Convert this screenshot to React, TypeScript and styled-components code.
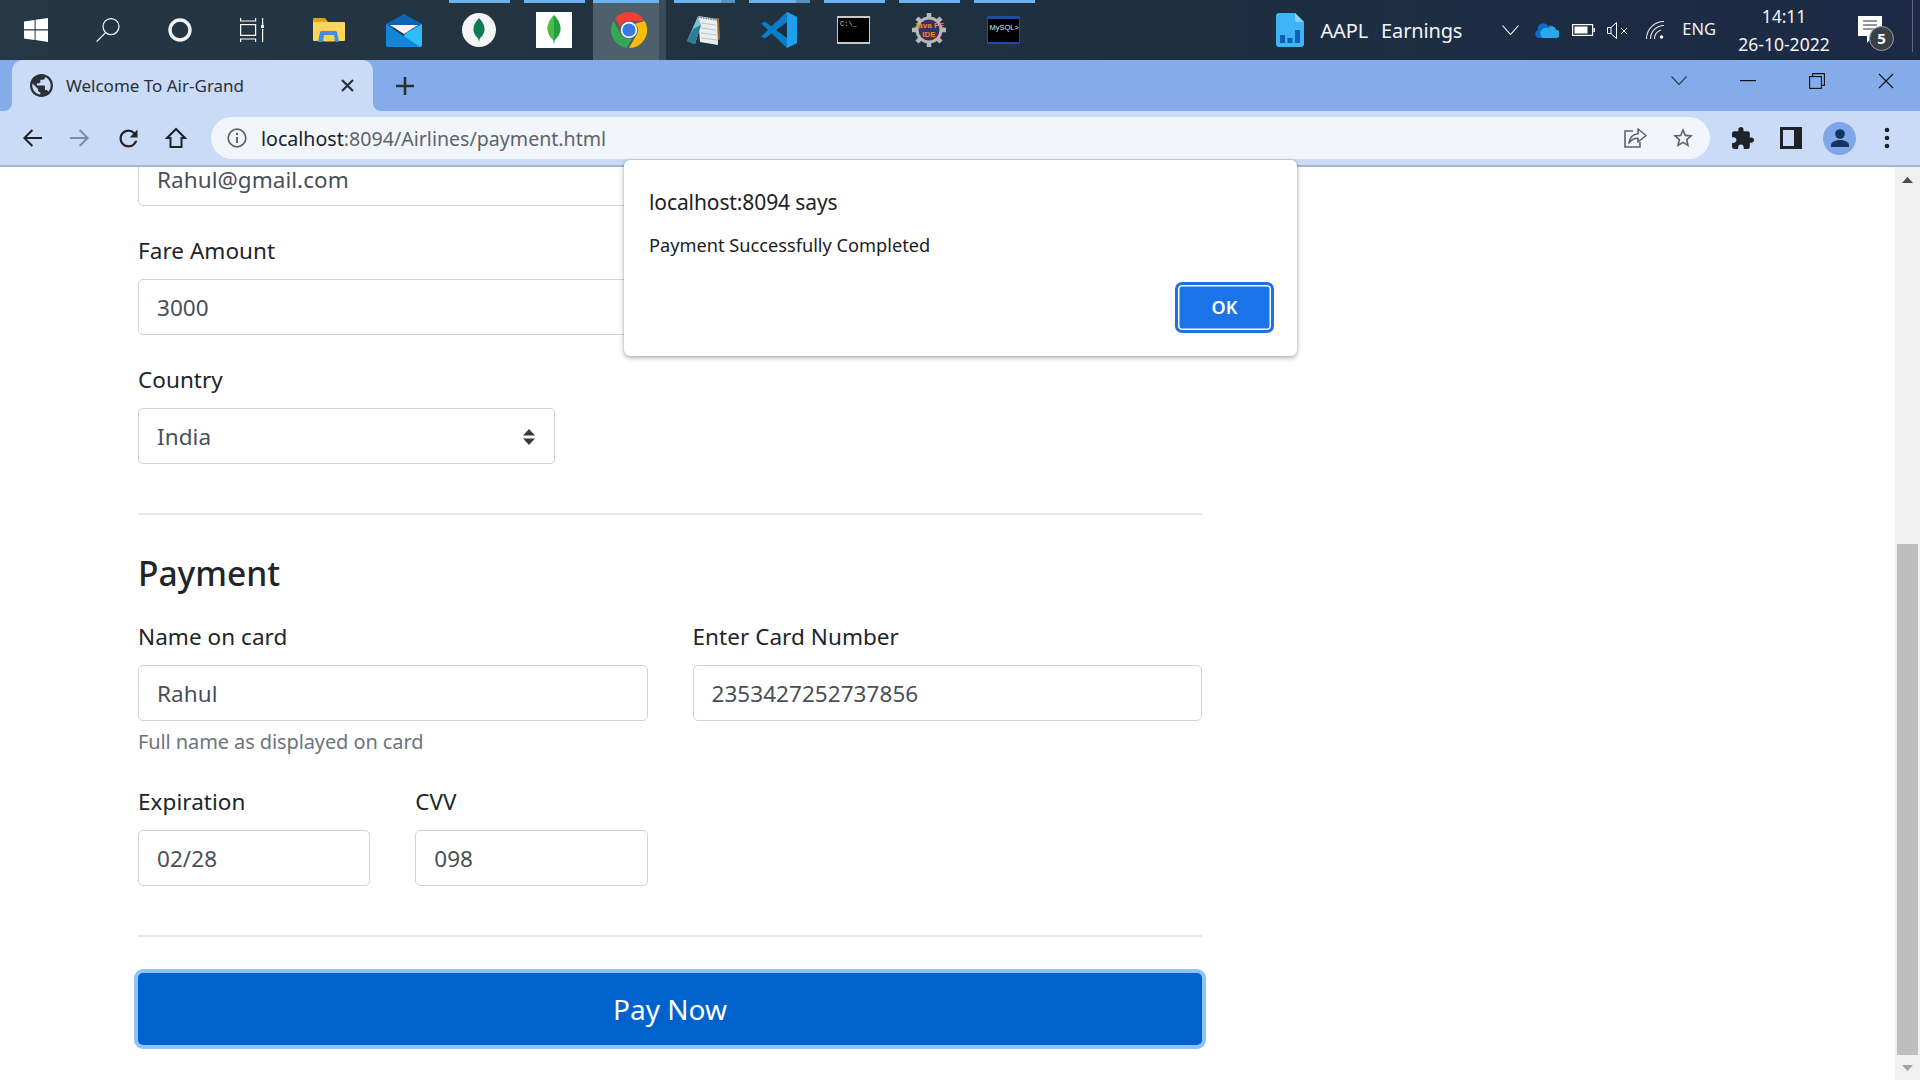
import React from "react";
import styled, { createGlobalStyle } from "styled-components";

const Global = createGlobalStyle`
  html, body { margin: 0; padding: 0; height: 1080px; overflow: hidden; background: #fff; }
  #root { height: 1080px; }
  * { box-sizing: border-box; }
`;

const UI = `"Noto Sans", "Open Sans", "Liberation Sans", sans-serif`;

const Page = styled.div`
  width: 1920px; height: 1080px; display: flex; flex-direction: column; overflow: hidden;
  position: relative; font-family: ${UI}; color: #212529;
`;

/* ---------- taskbar ---------- */
const Taskbar = styled.header`
  height: 60px; flex: none; display: flex; align-items: stretch;
  background: linear-gradient(90deg, #253744 0%, #1f3040 50%, #1c2a45 100%);
  color: #fff; position: relative;
`;
const SystemTile = styled.div`
  width: 72px; display: flex; align-items: center; justify-content: center;
`;
const AppGroup = styled.div`
  display: flex; margin-left: 3px;
`;
const AppTile = styled.div<{ $active?: boolean; $on?: boolean; $stack?: boolean }>`
  width: 75px; display: flex; align-items: center; justify-content: center; position: relative;
  &::before {
    content: ""; position: absolute; top: 0; left: ${(p) => (p.$active ? 2 : 8)}px; height: 3px;
    width: ${(p) => (p.$on ? (p.$active ? 66 : p.$stack ? 47 : 61) : 0)}px;
    background: #6fb1ec;
  }
  &::after {
    content: ""; position: absolute; top: 0; height: ${(p) => (p.$active ? 60 : 3)}px;
    left: ${(p) => (p.$active ? 2 : 55)}px;
    width: ${(p) => (p.$active ? 73 : p.$stack ? 14 : 0)}px;
    background: ${(p) =>
      p.$active ? "linear-gradient(90deg,#4f606d 0 66px,#3c4c59 66px 73px)" : "#5b90bb"};
    z-index: 0;
  }
  & > svg { position: relative; z-index: 1; }
  ${(p) => (p.$active ? `&::before { z-index: 1; }` : "")}
`;
const Tray = styled.div`
  margin-left: auto; display: flex; align-items: center; padding-right: 38px; position: relative;
  &::after {
    content: ""; position: absolute; right: 7px; top: 0; bottom: 8px; width: 1px; background: #5d6a80;
  }
`;
const TrayItem = styled.div<{ $gap: number }>`
  margin-left: ${(p) => p.$gap}px; display: flex; align-items: center; position: relative;
`;
const NewsText = styled.span`
  font-size: 20px; letter-spacing: -0.15px; word-spacing: 1.5px; white-space: pre; line-height: 1; margin-top: 2px;
  color: #f3f5f8;
`;
const LangText = styled.span`
  font-size: 16.5px; line-height: 1; color: #eef1f5; margin-top: -1px;
`;
const Clock = styled.div`
  width: 96px; display: flex; flex-direction: column; align-items: center; gap: 8px;
  font-size: 17.5px; line-height: 20px; color: #f3f5f8; margin-top: 0;
`;
const Badge = styled.span`
  position: absolute; left: 11px; top: 10px; width: 25px; height: 25px; border-radius: 50%;
  background: #3b3f47; border: 1px solid #9aa0a8; color: #fff; font-size: 15px; font-weight: 700;
  display: flex; align-items: center; justify-content: center; line-height: 1;
`;

/* ---------- tab strip ---------- */
const TabStrip = styled.div`
  height: 51px; flex: none; display: flex; background: #85acea; padding-left: 12px; align-items: stretch;
`;
const Tab = styled.div`
  width: 361px; background: #c9dbf7; border-radius: 11px 11px 0 0; display: flex; align-items: center;
  padding: 0 19px 0 18px; position: relative;
  &::before, &::after {
    content: ""; position: absolute; bottom: 0; width: 8px; height: 8px; background: #c9dbf7;
  }
  &::before { left: -8px; clip-path: path("M8 0 V8 H0 A8 8 0 0 0 8 0 Z"); }
  &::after { right: -8px; clip-path: path("M0 0 V8 H8 A8 8 0 0 1 0 0 Z"); }
`;
const TabTitle = styled.span`
  margin-left: 13px; font-size: 17px; line-height: 1; color: #2b2f36; flex: 1; white-space: nowrap; margin-top: -1px;
`;
const PlusButton = styled.div`
  margin-left: 22px; display: flex; align-items: center;
`;
const WindowControls = styled.div`
  margin-left: auto; display: flex; align-items: center; padding-right: 26px; margin-top: -10px;
`;
const WindowControl = styled.div<{ $gap: number }>`
  margin-left: ${(p) => p.$gap}px; display: flex;
`;

/* ---------- toolbar ---------- */
const Toolbar = styled.div`
  height: 56px; flex: none; display: flex; align-items: flex-start; background: #c9dbf7;
  border-bottom: 2px solid #a6b5d0; padding: 6px 0 0 8px;
`;
const NavButton = styled.div`
  width: 48px; height: 42px; display: flex; align-items: center; justify-content: center;
`;
const Omnibox = styled.div`
  width: 1499px; height: 42px; background: #f2f6fc; border-radius: 21px; display: flex; align-items: center;
  padding: 0 15px 0 16px; margin-left: 11px;
`;
const UrlText = styled.span`
  margin-left: 14px; font-size: 19.6px; line-height: 1; color: #5f6368; white-space: nowrap; flex: 1; margin-top: 1px;
`;
const UrlHost = styled.span`
  color: #202124;
`;
const OmniAction = styled.div<{ $gap: number }>`
  margin-left: ${(p) => p.$gap}px; display: flex;
`;
const ToolIcons = styled.div`
  display: flex; align-items: center; height: 42px;
`;
const ToolIcon = styled.div<{ $gap: number }>`
  margin-left: ${(p) => p.$gap}px; display: flex;
`;
const Avatar = styled.div`
  width: 33px; height: 33px; border-radius: 50%; background: #7ea6e8; display: flex;
  align-items: center; justify-content: center; margin-left: 21px;
`;

/* ---------- content ---------- */
const Viewport = styled.main`
  flex: 1; min-height: 0; display: flex; overflow: hidden;
`;
const PageArea = styled.div`
  flex: 1; min-width: 0; padding-left: 138px; overflow: hidden;
`;
const Form = styled.div`
  width: 1064px; margin-top: -17px;
`;
const Grid = styled.div`
  display: grid; grid-template-columns: repeat(4, 1fr); column-gap: 45px;
`;
const Field = styled.div<{ $span?: number }>`
  grid-column: span ${(p) => p.$span ?? 4};
`;
const FieldLabel = styled.div`
  font-size: 22.5px; line-height: 30px; margin: 30px 0 13px; color: #212529; letter-spacing: 0.05px;
`;
const FirstLabel = styled(FieldLabel)`
  margin-top: 0;
`;
const Control = styled.div`
  height: 56px; border: 1px solid #ced4da; border-radius: 5px; background: #fff; padding: 3px 18px 0;
  display: flex; align-items: center; font-size: 22.5px; line-height: 1.1; color: #495057; letter-spacing: 0.05px;
`;
const SelectControl = styled(Control)`
  width: 417px; justify-content: space-between; padding-right: 19px; padding-top: 2px;
`;
const EmailControl = styled(Control)`
  width: 509px; align-items: flex-end; padding-bottom: 14px; line-height: 1;
`;
const Help = styled.div`
  font-size: 20px; line-height: 30px; margin-top: 6px; color: #6c757d; letter-spacing: -0.1px;
`;
const Rule = styled.hr<{ $top: number; $bottom: number }>`
  border: 0; height: 2px; background: #e6e7e9; margin: ${(p) => p.$top}px 0 ${(p) => p.$bottom}px;
`;
const Heading = styled.h4`
  margin: 0 0 27px; font-size: 33.5px; line-height: 44px; font-weight: 500; color: #212529; letter-spacing: 0;
`;
const PayButton = styled.button`
  display: block; width: 1064px; height: 72px; border: 0; border-radius: 5px; background: #0062cc;
  box-shadow: 0 0 0 4px #8fc3fd; color: #fff; font-family: ${UI}; font-size: 28px; padding: 0;
`;
const Scrollbar = styled.div`
  width: 25px; flex: none; background: #f0f0f0; display: flex; flex-direction: column; align-items: center;
`;
const ScrollUp = styled.div`
  height: 25px; display: flex; align-items: center;
`;
const ScrollTrack = styled.div`
  flex: 1; width: 100%; padding: 352px 2px 0;
`;
const ScrollThumb = styled.div`
  height: 100%; background: #bebebe;
`;
const ScrollDown = styled.div`
  height: 25px; display: flex; align-items: center;
`;

/* ---------- alert ---------- */
const Dialog = styled.div`
  position: absolute; left: 624px; top: 160px; width: 673px; height: 196px; background: #fff; border-radius: 6px;
  box-shadow: 0 2px 5px rgba(60, 64, 67, 0.4), 0 0 1.5px rgba(60, 64, 67, 0.3);
  padding: 27px 20px 23px 25px; display: flex; flex-direction: column;
`;
const DialogTitle = styled.div`
  font-size: 21px; line-height: 30px; color: #202124; letter-spacing: -0.1px;
`;
const DialogMessage = styled.div`
  font-size: 18.2px; line-height: 26px; margin-top: 15px; color: #202124;
`;
const DialogActions = styled.div`
  margin-top: auto; display: flex; justify-content: flex-end; padding-right: 3px;
`;
const OkButton = styled.button`
  width: 99px; height: 51px; border-radius: 7px; border: 3px solid #1a73e8; background: #1a73e8;
  box-shadow: inset 0 0 0 1.5px #fff; color: #fff; font-family: ${UI}; font-size: 18px; font-weight: 600; padding: 0 0 2px;
`;

const W = "#ffffff";

const WinLogo = () => (
  <svg width="24" height="24" viewBox="0 0 24 24"><path fill={W} d="M0 3.4 10.6 2v9.3H0zM11.6 1.8 24 0v11.3H11.6zM0 12.4h10.6V22L0 20.6zM11.6 12.4H24V24l-12.4-1.9z" /></svg>
);
const SearchIcon = () => (
  <svg width="24" height="24" viewBox="0 0 24 24" fill="none" stroke={W} strokeWidth="1.2"><circle cx="15" cy="8.6" r="8" /><path d="M9.6 14.6 0.6 23.6" /></svg>
);
const CortanaIcon = () => (
  <svg width="24" height="24" viewBox="0 0 24 24" fill="none" stroke="#f2f2f2" strokeWidth="3.4"><circle cx="12" cy="12" r="10" /></svg>
);
const TaskViewIcon = () => (
  <svg width="24" height="24" viewBox="0 0 24 24" fill="none" stroke={W} strokeWidth="1.2"><path d="M0.6 0v3h15v-3M0.6 24v-3h15v3" /><rect x="0.6" y="6.6" width="15" height="10.8" /><path d="M22.6 0v7M22.6 11v13" /><rect x="21" y="7" width="3" height="3" fill={W} stroke="none" /></svg>
);
const FolderIcon = () => (
  <svg width="32" height="26" viewBox="0 0 32 26"><path fill="#e3a30c" d="M1 1h11l3 4h16v6H0V2a1 1 0 0 1 1-1z" /><path fill="#ffd65c" d="M0 5h31a1 1 0 0 1 1 1v17a1 1 0 0 1-1 1H1a1 1 0 0 1-1-1z" /><path fill="#3d92cf" d="M5 25 7 15a2 2 0 0 1 2-1h13a2 2 0 0 1 2 1l2 10h-4l-1-7h-10l-1 7z" /><rect x="11" y="18.5" width="10" height="6" fill="#ffd24d" /></svg>
);
const MailIcon = () => (
  <svg width="36" height="33" viewBox="0 0 36 33"><path fill="#0f63b5" d="M0 10 18 0l18 10v4H0z" /><path fill="#f2f2f2" d="M4 11h28L18 20z" /><path fill="#2dbcf5" d="M36 10v21a2 2 0 0 1-2 2H8L20 19z" /><path fill="#1286d8" d="M0 10v21a2 2 0 0 0 2 2h32z" /></svg>
);
const MongoRound = () => (
  <svg width="34" height="34" viewBox="0 0 34 34"><circle cx="17" cy="17" r="17" fill="#f4f5f4" /><path fill="#0f7a55" d="M17 5c3 3 5.6 7 5.6 11 0 4.6-3.2 8-4.8 9.4L17 29l-.8-3.6C14.600 24 11.400 20.600 11.400 16c0-4 2.600-8 5.600-11z" /></svg>
);
const MongoSquare = () => (
  <svg width="36" height="36" viewBox="0 0 36 36"><rect width="36" height="36" fill="#fff" /><path fill="#21a042" d="M18 3c3.400 3.400 6.600 8.400 6.600 13.600 0 6-3.800 9.800-5.800 11.400L18 33z" /><path fill="#4cb84a" d="M18 3c-3.400 3.400-6.600 8.400-6.600 13.600 0 6 3.800 9.800 5.800 11.400L18 33z" /></svg>
);
const ChromeIcon = () => (
  <svg width="36" height="36" viewBox="0 0 48 48"><path fill="#ea4335" d="M24 0a24 24 0 0 1 20.800 12H24a12 12 0 0 0-11.400 8.200L5.400 8.300A24 24 0 0 1 24 0z" /><path fill="#34a853" d="M3.200 12 13.600 30a12 12 0 0 0 14.200 5.400L21 47.800A24 24 0 0 1 3.200 12z" /><path fill="#fbbc04" d="M44.800 12A24 24 0 0 1 24 48l10.400-18A12 12 0 0 0 32 15.500z" /><circle cx="24" cy="24" r="11" fill="#fff" /><circle cx="24" cy="24" r="8.800" fill="#3b78e7" /></svg>
);
const NotepadIcon = () => (
  <svg width="33" height="31" viewBox="0 0 33 31"><path fill="#8f6d32" d="M29 3h3l1 21-3 2z" /><path fill="#e9eef0" d="M11 1 30 4l1 26-18-3z" /><path stroke="#b8c4c8" strokeWidth="1" d="M14 8 29 10M14 13 29 15M14 18 30 20M14 23 30 25" /><path fill="#7fc0cf" d="M11 1 14 10 8 29 0 26z" /><path fill="#2a7f94" d="M6 14 14 10 8 29 0 26z" /><path stroke="#6d777c" strokeWidth="1.500" strokeDasharray="1.500 1" d="M11 2 30 5" /></svg>
);
const VsCodeIcon = () => (
  <svg width="36" height="36" viewBox="0 0 36 36"><path fill="#0b7cc6" d="M26 0 36 5v26l-10 5L10.500 21.500 4 26.500 0 24.500 7 18 0 11.500 4 9.500 10.500 14.500z" /><path fill="#1fa0ee" d="M26 0 36 5v26l-10 5z" /><path fill="#1e2e3d" d="M26 10 15 18 26 26z" /><path fill="#0b7cc6" d="M26 0v10L15 18 10.500 14.500z" /></svg>
);
const CmdIcon = () => (
  <svg width="33" height="28" viewBox="0 0 33 28"><rect width="33" height="28" fill="#c8c8c8" /><rect x="1" y="2" width="31" height="24" fill="#000" /><text x="3" y="10" fill="#d0d0d0" fontSize="7" fontFamily="Liberation Mono, monospace">C:\_</text></svg>
);
const JavaIcon = () => (
  <svg width="34" height="34" viewBox="0 0 34 34"><g fill="#b8b8b8"><circle cx="17" cy="17" r="13.500" /><g stroke="#b8b8b8" strokeWidth="4.500"><path d="M17 0v34M0 17h34M5 5l24 24M29 5 5 29" /></g></g><circle cx="17" cy="17" r="10.500" fill="#3b2f63" /><text x="17" y="15" textAnchor="middle" fill="#f28a18" fontSize="8" fontWeight="700" fontFamily="Liberation Sans, sans-serif">Java FE</text><text x="17" y="23.500" textAnchor="middle" fill="#f28a18" fontSize="8" fontWeight="700" fontFamily="Liberation Sans, sans-serif">IDE</text></svg>
);
const MySqlIcon = () => (
  <svg width="33" height="28" viewBox="0 0 33 28"><rect width="33" height="28" rx="1" fill="#1f4aa8" /><rect x="1" y="3" width="31" height="23" fill="#000" /><text x="2.500" y="14" fill="#dfe8f5" fontSize="7.500" fontFamily="Liberation Sans, sans-serif">MySQL&gt;</text></svg>
);
const DocIcon = () => (
  <svg width="28" height="34" viewBox="0 0 28 34"><path fill="#41b4f5" d="M3 0h16l9 9v22a3 3 0 0 1-3 3H3a3 3 0 0 1-3-3V3a3 3 0 0 1 3-3z" /><path fill="#8bd3fa" d="M19 0l9 9h-7a2 2 0 0 1-2-2z" /><g fill="#0f5fb5"><rect x="4" y="22" width="5" height="8" /><rect x="11.500" y="25" width="5" height="5" /><rect x="19" y="17" width="5" height="13" /></g></svg>
);
const ChevronDown = ({ w = 17, h = 10, c = W }: { w?: number; h?: number; c?: string }) => (
  <svg width={w} height={h} viewBox={`0 0 ${w} ${h}`} fill="none" stroke={c} strokeWidth="1.1"><path d={`M0.5 0.5 ${w / 2} ${h - 0.5} ${w - 0.5} 0.5`} /></svg>
);
const CloudIcon = () => (
  <svg width="24" height="16" viewBox="0 0 24 16"><path fill="#0f6cc4" d="M4 16a4 4 0 0 1-1-7.800A5.500 5.500 0 0 1 13 4a4.500 4.500 0 0 1 6.500 3.500 4 4 0 0 1 .5 8.500z" /><path fill="#28a8ea" d="M8 16h13a3 3 0 0 0 0-8 4 4 0 0 0-7.500-1.500A4 4 0 0 0 8 16z" /></svg>
);
const BatteryIcon = () => (
  <svg width="23" height="12" viewBox="0 0 23 12"><rect x="0.600" y="0.600" width="20" height="10.800" fill="none" stroke={W} strokeWidth="1.200" /><rect x="2.500" y="2.500" width="13" height="7" fill={W} /><rect x="21.500" y="4" width="1.500" height="4" fill={W} /></svg>
);
const SpeakerIcon = () => (
  <svg width="22" height="17" viewBox="0 0 22 17" fill="none" stroke={W} strokeWidth="1"><path d="M0.500 5.500h3.500l5.500-5v16l-5.500-5H0.500zM4 5.500v6" /><path d="M14 6l6 6M20 6l-6 6" /></svg>
);
const WifiIcon = () => (
  <svg width="20" height="18" viewBox="0 0 20 18" fill="none" stroke="#e8e8e8" strokeWidth="1.100"><path d="M0.500 18A17.500 17.500 0 0 1 18 0.500M4.500 18A13.500 13.500 0 0 1 18 4.500M8.500 18A9.500 9.500 0 0 1 15 9" /><circle cx="15.500" cy="16" r="1.800" fill={W} stroke="none" /></svg>
);
const NotifyIcon = () => (
  <svg width="24" height="28" viewBox="0 0 24 28"><path fill={W} d="M0 0h24v20H15l-6 7v-7H0z" /><path stroke="#2a2f3a" strokeWidth="1" d="M5 5h14M5 9h14M5 13h14" /></svg>
);
const GlobeIcon = () => (
  <svg width="23" height="23" viewBox="2 2 20 20"><path fill="#2b2f36" d="M12 2C6.480 2 2 6.480 2 12s4.480 10 10 10 10-4.480 10-10S17.520 2 12 2zm-1 17.930c-3.950-.49-7-3.850-7-7.930 0-.62.080-1.210.21-1.790L9 15v1c0 1.100.9 2 2 2v1.930zm6.900-2.540c-.26-.81-1-1.390-1.900-1.390h-1v-3c0-.55-.45-1-1-1H8v-2h2c.55 0 1-.45 1-1V7h2c1.100 0 2-.9 2-2v-.41c2.930 1.190 5 4.060 5 7.410 0 2.080-.8 3.970-2.100 5.390z" /></svg>
);
const XIcon = ({ s = 13, c = "#2b2f36", w = 2.2 }: { s?: number; c?: string; w?: number }) => (
  <svg width={s} height={s} viewBox={`0 0 ${s} ${s}`} fill="none" stroke={c} strokeWidth={w}><path d={`M1 1 ${s - 1} ${s - 1}M${s - 1} 1 1 ${s - 1}`} /></svg>
);
const PlusIcon = () => (
  <svg width="20" height="20" viewBox="0 0 20 20" fill="none" stroke="#2b2f36" strokeWidth="2.600"><path d="M10 1v18M1 10h18" /></svg>
);
const MinimizeIcon = () => (
  <svg width="16" height="2" viewBox="0 0 16 2"><rect width="16" height="1.200" fill="#111" /></svg>
);
const RestoreIcon = () => (
  <svg width="16" height="16" viewBox="0 0 16 16" fill="none" stroke="#111" strokeWidth="1.100"><rect x="0.600" y="3.600" width="11.800" height="11.800" /><path d="M3.600 3.500V0.600h11.800v11.800h-3" /></svg>
);
const ArrowLeft = ({ c = "#1f2329" }: { c?: string }) => (
  <svg width="24" height="24" viewBox="0 0 24 24"><path fill={c} d="M22 11H6.830l6.290-6.290L11.700 3.300 3 12l8.700 8.700 1.420-1.410L6.830 13H22z" /></svg>
);
const ArrowRight = () => (
  <svg width="24" height="24" viewBox="0 0 24 24"><path fill="#7f8ca3" d="M2 11h15.170l-6.290-6.290L12.300 3.300 21 12l-8.700 8.700-1.420-1.410L17.170 13H2z" /></svg>
);
const ReloadIcon = () => (
  <svg width="27" height="27" viewBox="0 0 24 24"><path fill="#1f2329" d="M17.650 6.350A7.958 7.958 0 0 0 12 4c-4.420 0-7.990 3.580-7.990 8s3.570 8 7.990 8c3.730 0 6.840-2.550 7.730-6h-2.080A5.990 5.990 0 0 1 12 18c-3.310 0-6-2.690-6-6s2.690-6 6-6c1.660 0 3.140.69 4.220 1.780L13 11h7V4l-2.350 2.350z" /></svg>
);
const HomeIcon = () => (
  <svg width="22" height="22" viewBox="0 0 22 22" fill="none" stroke="#1f2329" strokeWidth="2"><path d="M11 2 2 11h3.500v9h11v-9H20z" strokeLinejoin="miter" /></svg>
);
const InfoIcon = () => (
  <svg width="20" height="20" viewBox="0 0 20 20" fill="none" stroke="#5f6368" strokeWidth="1.700"><circle cx="10" cy="10" r="8.800" /><path d="M10 9v6" strokeWidth="2" /><circle cx="10" cy="6" r="1.200" fill="#5f6368" stroke="none" /></svg>
);
const ShareIcon = () => (
  <svg width="23" height="20" viewBox="0 0 23 20" fill="none" stroke="#5f6368" strokeWidth="1.600"><path d="M9 3H1v16h15v-5" /><path d="M14 1l8 6.500-8 6.500v-3.800c-4 0-7 1.300-9 5 .6-5 3.500-9 9-9.500z" strokeLinejoin="round" /></svg>
);
const StarIcon = () => (
  <svg width="24" height="24" viewBox="0 0 24 24"><path fill="#5f6368" d="M22 9.240l-7.190-.62L12 2 9.190 8.630 2 9.240l5.460 4.730L5.820 21 12 17.270 18.180 21l-1.630-7.030L22 9.240zM12 15.400l-3.760 2.270 1-4.280-3.320-2.880 4.380-.38L12 6.100l1.710 4.040 4.380.38-3.320 2.880 1 4.280L12 15.400z" /></svg>
);
const PuzzleIcon = () => (
  <svg width="23" height="23" viewBox="1 1 22 22"><path fill="#1f2329" d="M20.500 11H19V7c0-1.100-.9-2-2-2h-4V3.500C13 2.120 11.880 1 10.500 1S8 2.120 8 3.500V5H4c-1.100 0-1.990.9-1.990 2v3.800H3.500c1.490 0 2.700 1.210 2.700 2.700s-1.210 2.700-2.700 2.700H2V20c0 1.100.9 2 2 2h3.800v-1.500c0-1.490 1.210-2.700 2.700-2.700 1.490 0 2.700 1.210 2.700 2.700V22H17c1.100 0 2-.9 2-2v-4h1.500c1.380 0 2.500-1.120 2.500-2.500S21.880 11 20.500 11z" /></svg>
);
const PanelIcon = () => (
  <svg width="22" height="22" viewBox="0 0 22 22"><path fill="#1f2329" fillRule="evenodd" d="M0 0h22v22H0zM3 3v16h11V3z" /></svg>
);
const PersonIcon = () => (
  <svg width="22" height="22" viewBox="0 0 22 22"><circle cx="11" cy="7" r="4.800" fill="#12355f" /><path fill="#12355f" d="M2 20v-2c0-3.500 5.500-5 9-5s9 1.500 9 5v2z" /></svg>
);
const DotsIcon = () => (
  <svg width="6" height="22" viewBox="0 0 6 22"><circle cx="3" cy="3" r="2.300" fill="#1f2329" /><circle cx="3" cy="11" r="2.300" fill="#1f2329" /><circle cx="3" cy="19" r="2.300" fill="#1f2329" /></svg>
);
const SelectArrows = () => (
  <svg width="12" height="16" viewBox="0 0 12 16"><path fill="#343a40" d="M6 0l6 6.500H0zM6 16 0 9.500h12z" /></svg>
);
const TriUp = () => (
  <svg width="11" height="6" viewBox="0 0 11 6"><path fill="#4d4d4d" d="M5.500 0 11 6H0z" /></svg>
);
const TriDown = () => (
  <svg width="11" height="6" viewBox="0 0 11 6"><path fill="#a3a3a3" d="M5.500 6 11 0H0z" /></svg>
);

export default function App() {
  return (
    <Page>
      <Global />
      <Taskbar>
        <SystemTile><WinLogo /></SystemTile>
        <SystemTile><SearchIcon /></SystemTile>
        <SystemTile><CortanaIcon /></SystemTile>
        <SystemTile><TaskViewIcon /></SystemTile>
        <AppGroup>
          <AppTile><FolderIcon /></AppTile>
          <AppTile><MailIcon /></AppTile>
          <AppTile $on><MongoRound /></AppTile>
          <AppTile $on><MongoSquare /></AppTile>
          <AppTile $on $active><ChromeIcon /></AppTile>
          <AppTile $on $stack><NotepadIcon /></AppTile>
          <AppTile $on $stack><VsCodeIcon /></AppTile>
          <AppTile $on><CmdIcon /></AppTile>
          <AppTile $on><JavaIcon /></AppTile>
          <AppTile $on><MySqlIcon /></AppTile>
        </AppGroup>
        <Tray>
          <TrayItem $gap={0}><DocIcon /></TrayItem>
          <TrayItem $gap={16}><NewsText>AAPL  Earnings</NewsText></TrayItem>
          <TrayItem $gap={40}><ChevronDown /></TrayItem>
          <TrayItem $gap={16}><CloudIcon /></TrayItem>
          <TrayItem $gap={13}><BatteryIcon /></TrayItem>
          <TrayItem $gap={12}><SpeakerIcon /></TrayItem>
          <TrayItem $gap={17}><WifiIcon /></TrayItem>
          <TrayItem $gap={16}><LangText>ENG</LangText></TrayItem>
          <TrayItem $gap={20}>
            <Clock><span>14:11</span><span>26-10-2022</span></Clock>
          </TrayItem>
          <TrayItem $gap={26}><NotifyIcon /><Badge>5</Badge></TrayItem>
        </Tray>
      </Taskbar>

      <TabStrip>
        <Tab>
          <GlobeIcon />
          <TabTitle>Welcome To Air-Grand</TabTitle>
          <XIcon />
        </Tab>
        <PlusButton><PlusIcon /></PlusButton>
        <WindowControls>
          <WindowControl $gap={0}><ChevronDown w={16} h={9} c="#2b3850" /></WindowControl>
          <WindowControl $gap={53}><MinimizeIcon /></WindowControl>
          <WindowControl $gap={53}><RestoreIcon /></WindowControl>
          <WindowControl $gap={53}><XIcon s={16} c="#111" w={1.1} /></WindowControl>
        </WindowControls>
      </TabStrip>

      <Toolbar>
        <NavButton><ArrowLeft /></NavButton>
        <NavButton><ArrowRight /></NavButton>
        <NavButton><ReloadIcon /></NavButton>
        <NavButton><HomeIcon /></NavButton>
        <Omnibox>
          <InfoIcon />
          <UrlText><UrlHost>localhost</UrlHost>:8094/Airlines/payment.html</UrlText>
          <OmniAction $gap={0}><ShareIcon /></OmniAction>
          <OmniAction $gap={24}><StarIcon /></OmniAction>
        </Omnibox>
        <ToolIcons>
          <ToolIcon $gap={21}><PuzzleIcon /></ToolIcon>
          <ToolIcon $gap={26}><PanelIcon /></ToolIcon>
          <Avatar><PersonIcon /></Avatar>
          <ToolIcon $gap={28}><DotsIcon /></ToolIcon>
        </ToolIcons>
      </Toolbar>

      <Viewport>
        <PageArea>
          <Form>
            <EmailControl>Rahul@gmail.com</EmailControl>
            <Grid>
              <Field $span={2}>
                <FieldLabel>Fare Amount</FieldLabel>
                <Control>3000</Control>
              </Field>
              <Field>
                <FieldLabel>Country</FieldLabel>
                <SelectControl>India<SelectArrows /></SelectControl>
              </Field>
            </Grid>
            <Rule $top={49} $bottom={36} />
            <Heading>Payment</Heading>
            <Grid>
              <Field $span={2}>
                <FirstLabel>Name on card</FirstLabel>
                <Control>Rahul</Control>
                <Help>Full name as displayed on card</Help>
              </Field>
              <Field $span={2}>
                <FirstLabel>Enter Card Number</FirstLabel>
                <Control>2353427252737856</Control>
              </Field>
              <Field $span={1}>
                <FieldLabel>Expiration</FieldLabel>
                <Control>02/28</Control>
              </Field>
              <Field $span={1}>
                <FieldLabel>CVV</FieldLabel>
                <Control>098</Control>
              </Field>
            </Grid>
            <Rule $top={49} $bottom={36} />
            <PayButton>Pay Now</PayButton>
          </Form>
        </PageArea>
        <Scrollbar>
          <ScrollUp><TriUp /></ScrollUp>
          <ScrollTrack><ScrollThumb /></ScrollTrack>
          <ScrollDown><TriDown /></ScrollDown>
        </Scrollbar>
      </Viewport>

      <Dialog>
        <DialogTitle>localhost:8094 says</DialogTitle>
        <DialogMessage>Payment Successfully Completed</DialogMessage>
        <DialogActions><OkButton>OK</OkButton></DialogActions>
      </Dialog>
    </Page>
  );
}
